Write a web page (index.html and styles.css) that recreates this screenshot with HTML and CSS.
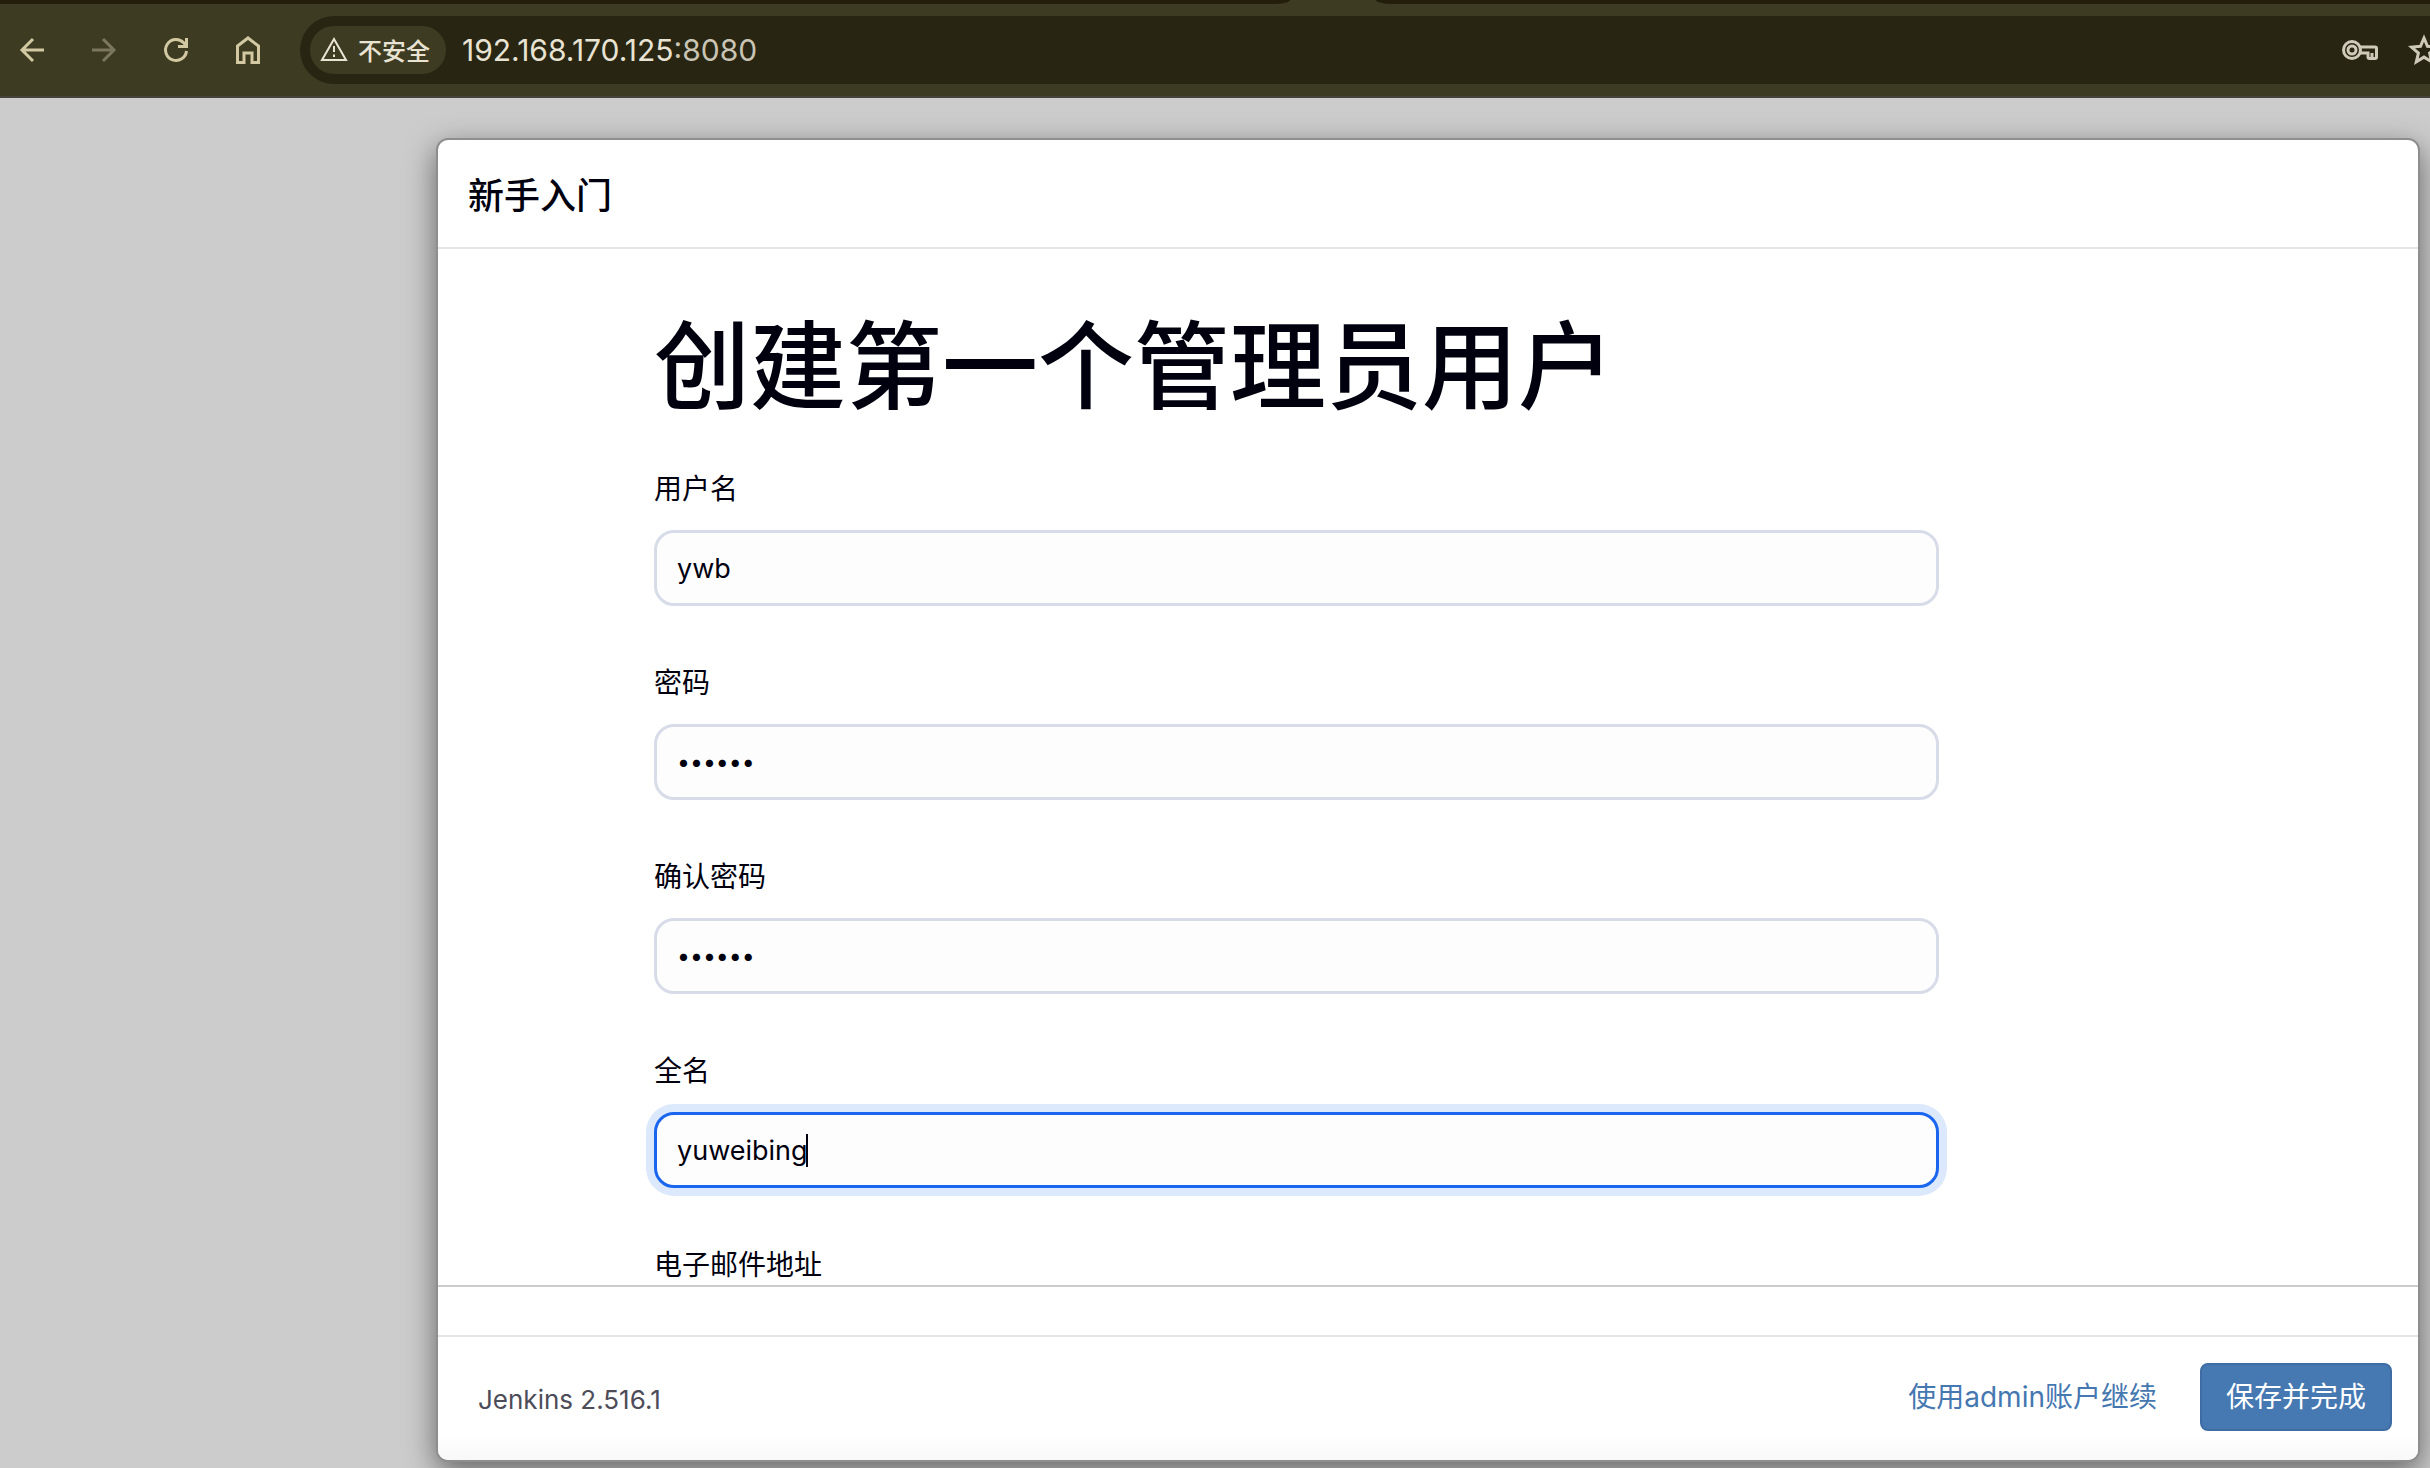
FILE: index.html
```html
<!DOCTYPE html>
<html lang="zh-CN">
<head>
<meta charset="utf-8">
<title>新手入门 - Jenkins</title>
<link rel="stylesheet" href="styles.css">
</head>
<body>
<header class="browser">
  <div class="tabstrip"><div class="tabs-before"></div><div class="tabs-after"></div></div>
  <div class="toolbar">
    <nav class="nav">
      <button class="icon-button" type="button" aria-label="后退"><svg viewBox="0 0 32 32" width="32" height="32"><path d="M28 16H6M17 5 6 16l11 11"/></svg></button>
      <button class="icon-button" type="button" aria-label="前进" disabled><svg viewBox="0 0 32 32" width="32" height="32"><path d="M4 16h22M15 5l11 11-11 11"/></svg></button>
      <button class="icon-button" type="button" aria-label="重新加载"><svg viewBox="0 0 32 32" width="32" height="32"><path d="M26.500 17A10.500 10.500 0 1 1 23.500 8.600L26 11.500M26.500 4v8.500H18"/></svg></button>
      <button class="icon-button" type="button" aria-label="主页"><svg viewBox="0 0 32 32" width="32" height="32"><path d="M5.500 28.500V12L16 4l10.500 8v16.500H20V19h-8v9.500z"/></svg></button>
    </nav>
    <div class="omnibox">
      <button class="security" type="button">
        <svg viewBox="0 0 28 26" width="28" height="26"><path d="M14 3 26 24H2z"/><path d="M14 10v6M14 18.500v2.500"/></svg>
        <span>不安全</span>
      </button>
      <span class="url">192.168.170.125<span class="port">:8080</span></span>
      <button class="icon-button key" type="button" aria-label="管理密码"><svg viewBox="0 0 36 20" width="36" height="20"><circle cx="10" cy="10" r="8.500"/><circle class="solid" cx="10" cy="10" r="4"/><path d="M18 7h15q1.500 0 1.500 1.500v8.500q0 1.500-1.500 1.500h-5.500q-1.500 0-1.500-1.500v-4H18M30 13v5"/></svg></button>
      <button class="icon-button star" type="button" aria-label="添加书签"><svg viewBox="0 0 32 32" width="32" height="32"><path d="m16 4 3.500 8.300 9 .8-6.900 5.900 2.100 8.800-7.700-4.700-7.700 4.700 2.100-8.800-6.900-5.900 9-.8z"/></svg></button>
    </div>
  </div>
</header>
<main class="page">
  <section class="dialog">
    <header class="dialog-header"><h2>新手入门</h2></header>
    <div class="dialog-body">
      <form class="form" id="setup">
        <h1>创建第一个管理员用户</h1>
        <div class="field"><label for="user">用户名</label><input id="user" type="text" value="ywb"></div>
        <div class="field"><label for="pass">密码</label><input id="pass" type="password" value="123456"></div>
        <div class="field"><label for="confirm">确认密码</label><input id="confirm" type="password" value="123456"></div>
        <div class="field"><label for="name">全名</label><div class="active"><input id="name" type="text" value="yuweibing"><span class="caret"></span></div></div>
        <div class="field"><label for="email">电子邮件地址</label><input id="email" type="email"></div>
      </form>
    </div>
    <div class="spacer"></div>
    <footer class="dialog-footer">
      <span class="version">Jenkins 2.516.1</span>
      <a href="#">使用admin账户继续</a>
      <button class="primary" type="submit" form="setup">保存并完成</button>
    </footer>
  </section>
</main>
</body>
</html>
```
FILE: styles.css
```css
* { box-sizing: border-box; }
body {
  margin: 0;
  height: 100vh;
  display: flex;
  flex-direction: column;
  overflow: hidden;
  background: #ccc;
  color: #00000f;
  font-family: Inter, "Noto Sans CJK SC", sans-serif;
  font-size: 28px;
}
button, input { font: inherit; color: inherit; }
button { border: 0; padding: 0; background: none; }
svg { display: block; fill: none; stroke: currentColor; stroke-width: 2; }

.browser { background: #3e3b23; border-bottom: 2px solid #46443a; }
.tabstrip { display: flex; gap: 86px; height: 4px; }
.tabs-before { width: 53.1%; background: #221e0b; border-bottom-right-radius: 16px 4px; }
.tabs-after { flex: 1; background: #221e0b; border-bottom-left-radius: 16px 4px; }
.toolbar { display: flex; gap: 36px; padding: 12px 0 12px 16px; }
.nav { display: flex; gap: 40px; align-items: center; color: #d2c9a3; }
.nav svg { stroke-width: 3; }
.icon-button:disabled { color: #7b765f; }
.omnibox {
  flex: 1;
  height: 68px;
  padding-left: 10px;
  display: flex;
  align-items: center;
  overflow: hidden;
  background: #282512;
  border-radius: 34px 0 0 34px;
  color: #e8e3d3;
}
.security {
  display: flex;
  gap: 10px;
  align-items: center;
  height: 48px;
  padding: 0 16px 2px 10px;
  border-radius: 24px;
  background: #3e3b23;
  font-size: 24px;
  font-weight: 500;
}
.url { flex: 1; padding-left: 16px; font-size: 30px; }
.port { color: #c9c4b4; }
.key, .star { flex: none; color: #cfc9b9; }
.key svg, .star svg { stroke-width: 3; }
.star { margin: 0 -10px 0 30px; }

.page { flex: 1; min-height: 0; display: flex; padding: 40px 10px 6px 436px; }
.dialog {
  flex: 1;
  min-width: 0;
  display: flex;
  flex-direction: column;
  border: 2px solid #8e8e8e;
  border-radius: 12px;
  background: #fff;
  box-shadow: 0 10px 30px rgba(0, 0, 0, .5);
}
.dialog-header { padding: 31px 30px 25px; border-bottom: 2px solid #e5e5e5; }
h2 { margin: 0; font-size: 36px; line-height: 51px; font-weight: 500; }
.dialog-body { flex: 1; min-height: 0; overflow: hidden; padding: 60px 216px 0; border-bottom: 2px solid #ccc; }
.form { width: 83%; }
h1 { margin: 0 0 44px; font-size: 96px; line-height: 115px; font-weight: 500; }
.field { margin-bottom: 56px; }
label { display: block; margin-bottom: 20px; line-height: 42px; }
input {
  display: block;
  width: 100%;
  height: 76px;
  padding: 0 20px;
  border: 3px solid #d8dce9;
  border-radius: 20px;
  outline: 0;
  background: #fdfdfd;
  font-size: 27px;
}
input[type="password"] { font-size: 23px; }
.active { position: relative; }
.active input { border-color: #1a66ee; box-shadow: 0 0 0 8px #dce8fc; }
.caret { position: absolute; left: 152px; top: 22px; width: 2px; height: 33px; background: #00000f; }
.spacer { height: 48px; }
.dialog-footer {
  display: flex;
  align-items: center;
  padding: 26px 26px 29px 40px;
  border-top: 2px solid #e5e5e5;
  border-radius: 0 0 10px 10px;
  background: linear-gradient(#fff 80%, #f8f8f8);
}
.version { flex: 1; font-size: 26px; color: #4d4c59; padding-top: 4px; }
a { padding-bottom: 4px; color: #4577b1; text-decoration: none; }
.primary {
  height: 68px;
  margin-left: 43px;
  padding: 0 24px 4px;
  border: 2px solid #3f6da3;
  border-radius: 8px;
  background: #4678b2;
  color: #fff;
}
```
